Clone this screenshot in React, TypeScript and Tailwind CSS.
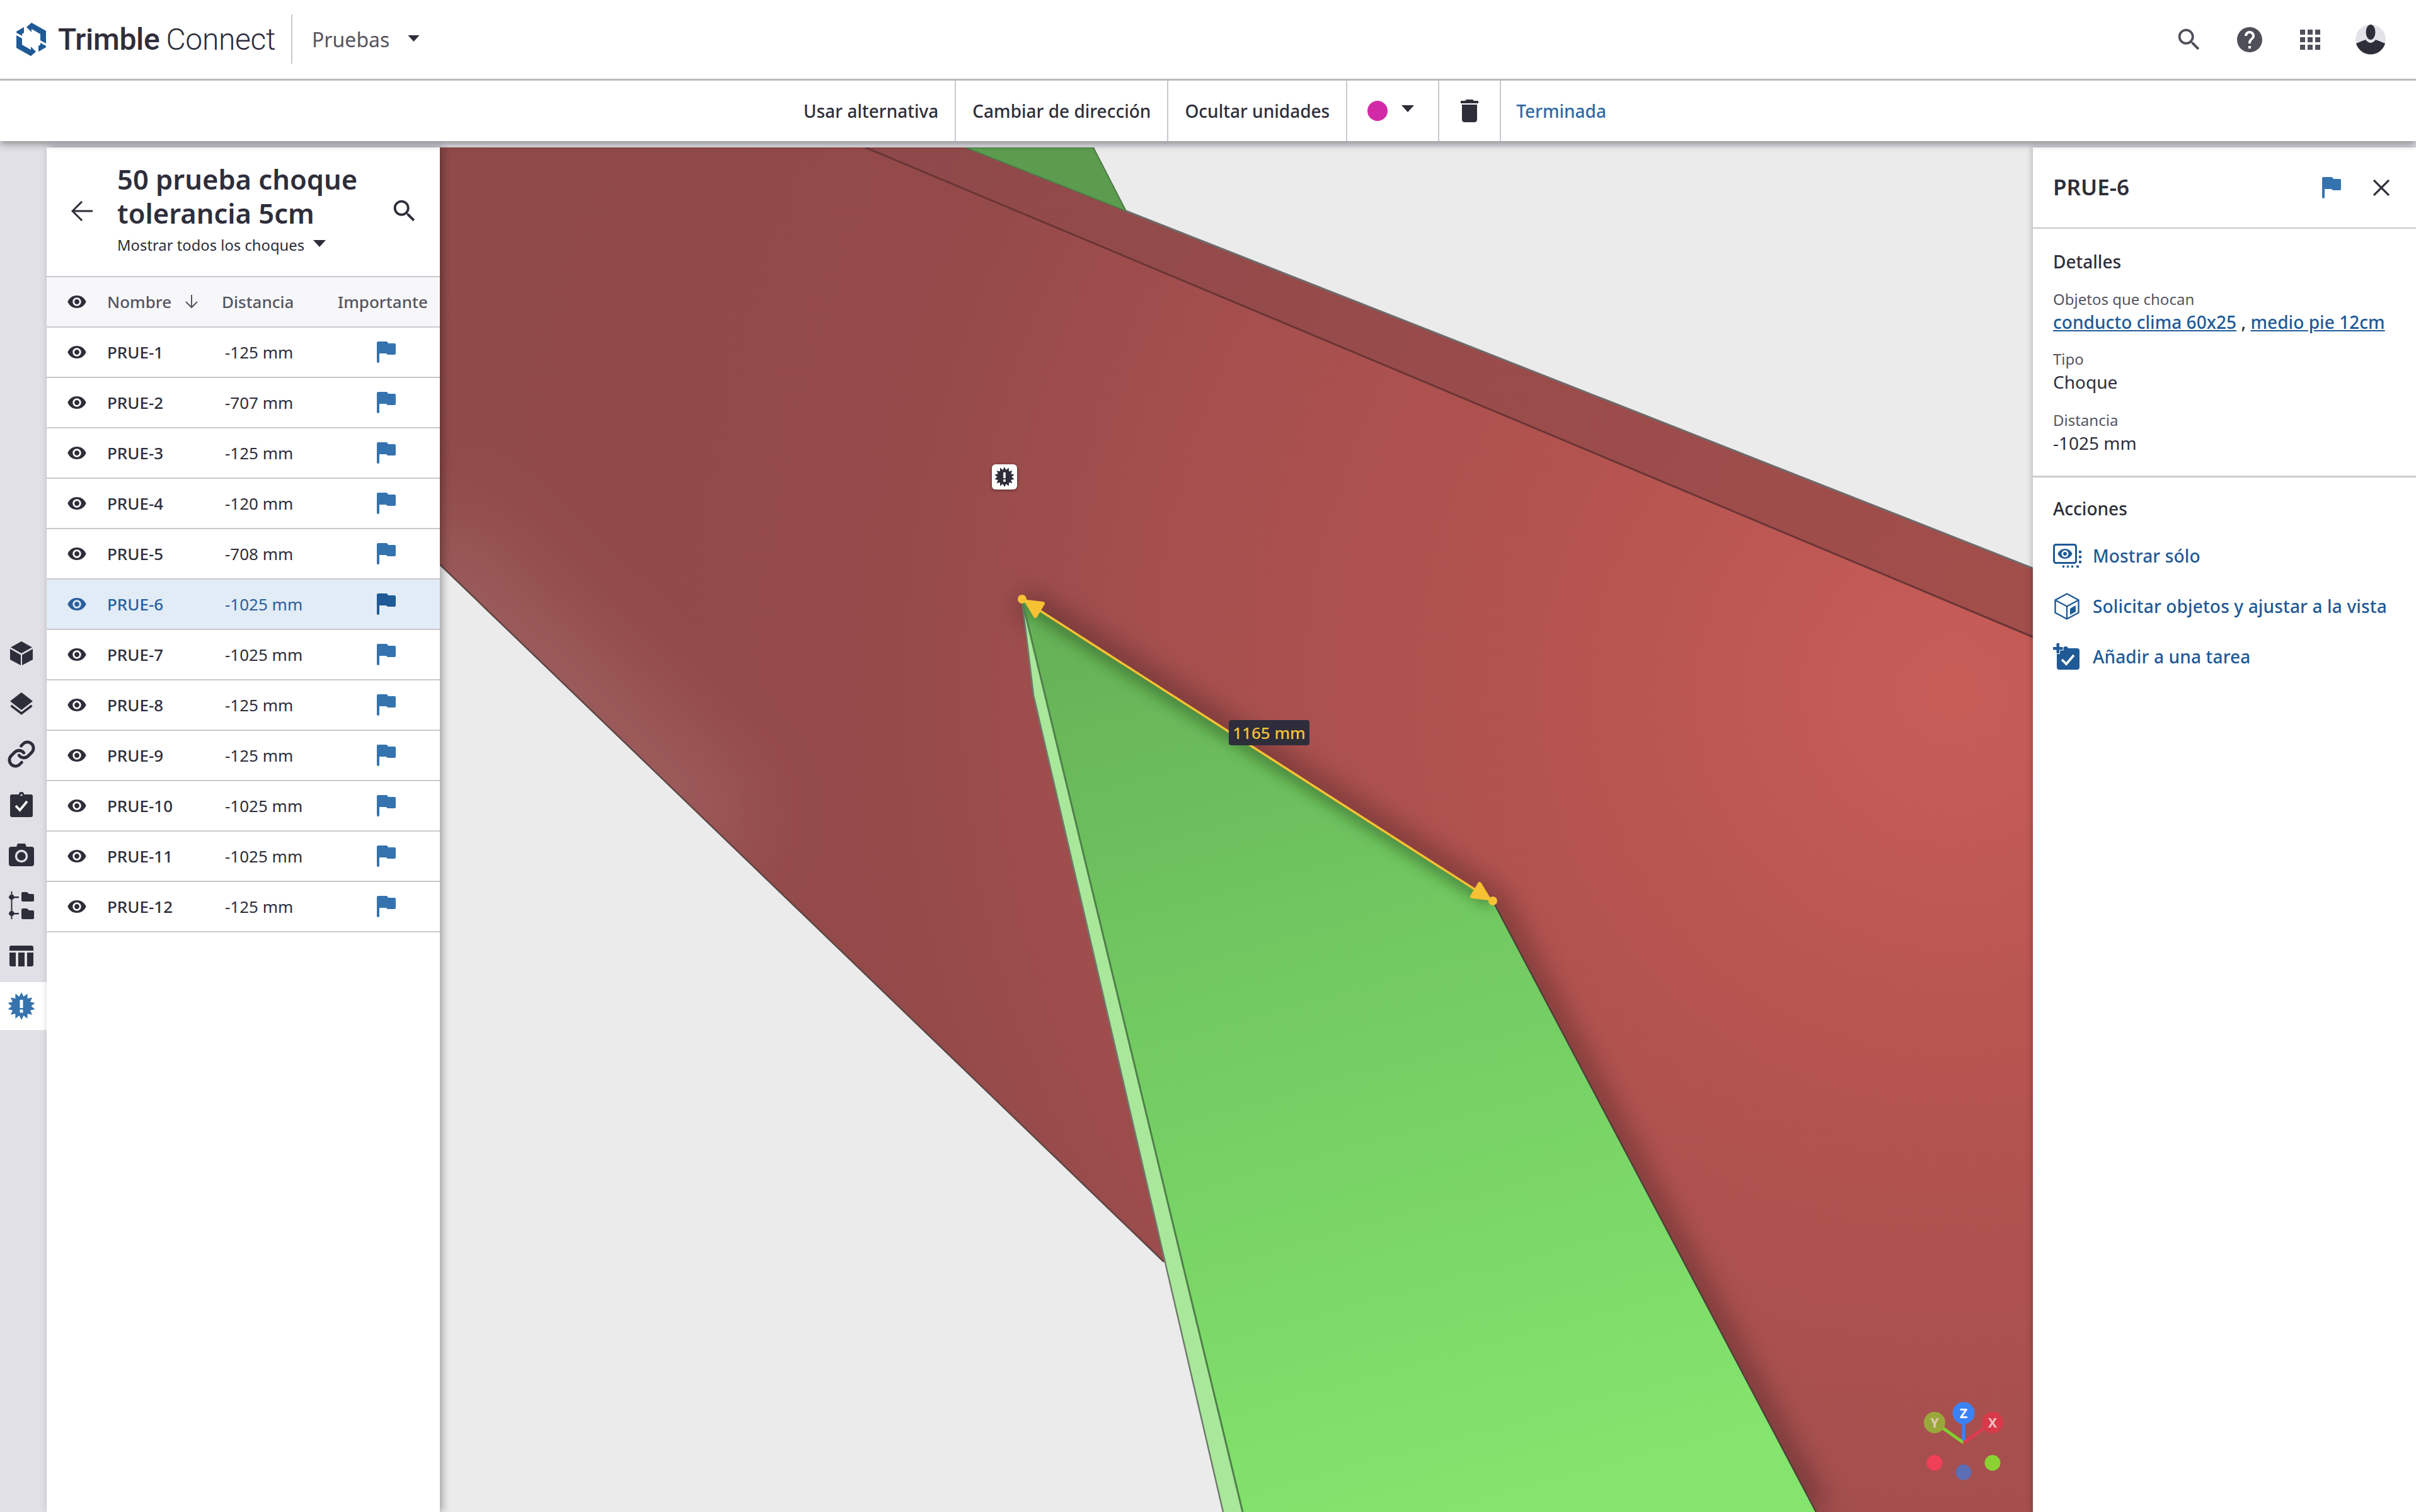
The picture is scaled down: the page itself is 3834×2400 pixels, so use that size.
import { Link } from "lucide-react";

const rows = [
  { name: "PRUE-1", dist: "-125 mm" },
  { name: "PRUE-2", dist: "-707 mm" },
  { name: "PRUE-3", dist: "-125 mm" },
  { name: "PRUE-4", dist: "-120 mm" },
  { name: "PRUE-5", dist: "-708 mm" },
  { name: "PRUE-6", dist: "-1025 mm", active: true },
  { name: "PRUE-7", dist: "-1025 mm" },
  { name: "PRUE-8", dist: "-125 mm" },
  { name: "PRUE-9", dist: "-125 mm" },
  { name: "PRUE-10", dist: "-1025 mm" },
  { name: "PRUE-11", dist: "-1025 mm" },
  { name: "PRUE-12", dist: "-125 mm" },
];

const burstPoints = Array.from({ length: 28 }, (_, i) => {
  const a = (i / 28) * Math.PI * 2 - Math.PI / 2;
  const r = i % 2 === 0 ? 22 : 15.5;
  return `${(22 + r * Math.cos(a)).toFixed(2)},${(22 + r * Math.sin(a)).toFixed(2)}`;
}).join(" ");

function Burst({ className }: { className?: string }) {
  return (
    <svg viewBox="0 0 44 44" className={className}>
      <polygon points={burstPoints} fill="currentColor" />
      <rect x="19.5" y="12" width="5" height="13" fill="#fff" />
      <rect x="19.5" y="27.5" width="5" height="5" fill="#fff" />
    </svg>
  );
}

function Eye({ className }: { className?: string }) {
  return (
    <svg viewBox="0 0 24 24" fill="currentColor" className={className}>
      <path d="M12 4.5C7 4.5 2.73 7.61 1 12c1.73 4.39 6 7.5 11 7.5s9.27-3.11 11-7.5c-1.73-4.39-6-7.5-11-7.5zM12 17c-2.76 0-5-2.24-5-5s2.24-5 5-5 5 2.24 5 5-2.24 5-5 5zm0-8c-1.66 0-3 1.34-3 3s1.34 3 3 3 3-1.34 3-3-1.34-3-3-3z" />
    </svg>
  );
}

function Flag({ className }: { className?: string }) {
  return (
    <svg viewBox="0 0 30 34" fill="currentColor" className={className}>
      <path d="M0 2Q0 0 2 0H15Q17 0 18 3H28Q30 3 30 5V19Q30 21 28 21H18Q16 21 15 19H4V32Q4 34 2 34Q0 34 0 32Z" />
    </svg>
  );
}

function Search({ className }: { className?: string }) {
  return (
    <svg viewBox="0 0 24 24" fill="currentColor" className={className}>
      <path d="M15.5 14h-.79l-.28-.27C15.41 12.59 16 11.11 16 9.5 16 5.91 13.09 3 9.5 3S3 5.91 3 9.5 5.91 16 9.5 16c1.61 0 3.09-.59 4.23-1.57l.27.28v.79l5 4.99L20.49 19l-4.99-5zm-6 0C7.01 14 5 11.99 5 9.5S7.01 5 9.5 5 14 7.01 14 9.5 11.99 14 9.5 14z" />
    </svg>
  );
}

function Caret({ className }: { className?: string }) {
  return (
    <svg viewBox="0 0 20 11" fill="currentColor" className={className}>
      <path d="M0 0H20L10 11Z" />
    </svg>
  );
}

function Logo() {
  return (
    <svg viewBox="0 0 47 53" className="w-[47px] h-[53px] text-[#1f5a96]" fill="currentColor">
      <path d="M24 0L47 13V33L38 28V18L24 10V15L16 7Z" />
      <path d="M23 53L0 40V20L9 25V35L23 43V38L31 46Z" />
      <path d="M0 14L12 7V16L9 18V21L0 16Z" />
      <path d="M47 39L35 46V37L38 35V32L47 37Z" />
    </svg>
  );
}

function RailIcon({ kind }: { kind: string }) {
  if (kind === "cube")
    return (
      <svg viewBox="0 0 36 38" className="w-[36px] h-[38px]" fill="currentColor">
        <path d="M18 0L35 9.5L18 19L1 9.5Z" />
        <path d="M0 12L17 21.5V38L0 29Z" />
        <path d="M36 12L19 21.5V38L36 29Z" />
      </svg>
    );
  if (kind === "layers")
    return (
      <svg viewBox="0 0 36 37" className="w-[36px] h-[37px]" fill="currentColor">
        <path d="M18 0L36 14L18 28L0 14Z" />
        <path d="M1.5 21L18 33.5L34.5 21" fill="none" stroke="currentColor" strokeWidth="3.5" />
      </svg>
    );
  if (kind === "link") return <Link size={46} strokeWidth={2.5} />;
  if (kind === "task")
    return (
      <svg viewBox="0 0 36 40" className="w-[36px] h-[40px]" fill="currentColor">
        <circle cx="18" cy="4" r="4" />
        <rect x="0" y="4" width="36" height="36" rx="3" />
        <circle cx="18" cy="5" r="1.6" fill="#dfdfe5" />
        <path d="M9 22L15.5 29L27 15" fill="none" stroke="#fff" strokeWidth="3.6" />
      </svg>
    );
  if (kind === "camera")
    return (
      <svg viewBox="0 0 40 36" className="w-[40px] h-[36px]" fill="currentColor">
        <path d="M12 5L14 0H26L28 5H36Q40 5 40 9V32Q40 36 36 36H4Q0 36 0 32V9Q0 5 4 5Z" />
        <circle cx="20" cy="20" r="8.5" fill="none" stroke="#dfdfe5" strokeWidth="3.4" />
      </svg>
    );
  if (kind === "tree")
    return (
      <svg viewBox="0 0 40 44" className="w-[40px] h-[44px]" fill="currentColor">
        <rect x="3.5" y="0" width="2" height="44" />
        <rect x="0" y="8" width="16" height="2.4" />
        <rect x="0" y="34" width="16" height="2.4" />
        <circle cx="4.5" cy="9" r="4" />
        <circle cx="4.5" cy="35" r="4" />
        <path d="M20 3Q20 1 22 1H29L32 4H38Q40 4 40 6V14Q40 16 38 16H22Q20 16 20 14Z" />
        <path d="M20 29Q20 27 22 27H29L32 30H38Q40 30 40 32V42Q40 44 38 44H22Q20 44 20 42Z" />
      </svg>
    );
  if (kind === "table")
    return (
      <svg viewBox="0 0 38 33" className="w-[38px] h-[33px]" fill="currentColor">
        <path d="M3 0H35Q38 0 38 3V8H0V3Q0 0 3 0Z" />
        <path d="M0 11H10V33H3Q0 33 0 30Z" />
        <rect x="14" y="11" width="10" height="22" />
        <path d="M28 11H38V30Q38 33 35 33H28Z" />
      </svg>
    );
  return <Burst className="w-[44px] h-[44px] text-[#3573ae]" />;
}

function Scene() {
  return (
    <svg viewBox="698 234 2528 2166" className="absolute inset-0 w-full h-full" preserveAspectRatio="none">
      <defs>
        <radialGradient id="red" gradientUnits="userSpaceOnUse" cx="3100" cy="1100" r="2500">
          <stop offset="0" stopColor="#c85d58" />
          <stop offset="0.28" stopColor="#b3534f" />
          <stop offset="0.52" stopColor="#a44f4e" />
          <stop offset="0.68" stopColor="#954a4a" />
          <stop offset="1" stopColor="#8f4a49" />
        </radialGradient>
        <linearGradient id="band" gradientUnits="userSpaceOnUse" x1="1400" y1="250" x2="3200" y2="950">
          <stop offset="0" stopColor="#8f494a" />
          <stop offset="1" stopColor="#a24e4b" />
        </linearGradient>
        <linearGradient id="green" gradientUnits="userSpaceOnUse" x1="1900" y1="950" x2="2300" y2="2400">
          <stop offset="0" stopColor="#66b257" />
          <stop offset="0.38" stopColor="#71c861" />
          <stop offset="1" stopColor="#84e46d" />
        </linearGradient>
        <filter id="glowBlur" x="-60%" y="-60%" width="220%" height="220%">
          <feGaussianBlur stdDeviation="70" />
        </filter>
        <filter id="soft" x="-20%" y="-20%" width="140%" height="140%">
          <feGaussianBlur stdDeviation="22" />
        </filter>
        <filter id="softer" x="-20%" y="-20%" width="140%" height="140%">
          <feGaussianBlur stdDeviation="10" />
        </filter>
        <clipPath id="redClip">
          <polygon points="698,234 1373,234 3226,1011 3226,2400 2882,2400 1847,2003 698,896" />
        </clipPath>
        <clipPath id="greenClip">
          <polygon points="1622,953 2369,1430 2882,2400 1972,2400" />
        </clipPath>
      </defs>

      <rect x="698" y="234" width="2528" height="2166" fill="#ebebeb" />

      <polygon points="1373,234 1532,234 1787,335 3226,902 3226,1011" fill="url(#band)" />
      <polygon points="1532,234 1735,234 1787,335" fill="#5b9c4e" stroke="#4f7a48" strokeWidth="2" />
      <polyline points="1787,335 3226,902" fill="none" stroke="#6f6a6a" strokeWidth="3" />

      <polygon points="698,234 1373,234 3226,1011 3226,2400 2882,2400 1847,2003 698,896" fill="url(#red)" />
      <g clipPath="url(#redClip)">
        <polyline points="640,860 1150,1350" fill="none" stroke="#fff" strokeOpacity="0.11" strokeWidth="170" filter="url(#glowBlur)" />
      </g>
      <polyline points="1373,234 3226,1011" fill="none" stroke="#6b3535" strokeWidth="3" />
      <polyline points="698,896 1847,2003" fill="none" stroke="#5e4545" strokeWidth="2.5" />

      <g clipPath="url(#redClip)">
        <polyline points="1622,953 2369,1430 2882,2400" fill="none" stroke="#000" strokeOpacity="0.33" strokeWidth="36" filter="url(#soft)" />
      </g>

      <polygon points="1622,953 1640,1103 1941,2400 1972,2400" fill="#a9e89a" />
      <polyline points="1622,953 1640,1103 1941,2400" fill="none" stroke="#6d7a6a" strokeWidth="2.5" />
      <polygon points="1622,953 2369,1430 2882,2400 1972,2400" fill="url(#green)" />
      <g clipPath="url(#greenClip)">
        <polyline points="1622,953 2369,1430" fill="none" stroke="#1e4a1a" strokeOpacity="0.45" strokeWidth="26" filter="url(#softer)" />
      </g>
      <polyline points="1622,953 1972,2400" fill="none" stroke="#4f7f4a" strokeWidth="3" />
      <polyline points="2369,1430 2882,2400" fill="none" stroke="#4e4038" strokeWidth="2.5" />

      <line x1="1622" y1="951" x2="2369" y2="1430" stroke="#f6c233" strokeWidth="3.5" />
      <circle cx="1622" cy="951" r="7" fill="#f6c233" />
      <circle cx="2369" cy="1430" r="7" fill="#f6c233" />
      <polygon points="1629,955 1643,978 1655,958" fill="#f6c233" stroke="#f6c233" strokeWidth="6" strokeLinejoin="round" />
      <polygon points="2362,1426 2336,1423 2348,1403" fill="#f6c233" stroke="#f6c233" strokeWidth="6" strokeLinejoin="round" />

      {/* axis gizmo */}
      <line x1="3116" y1="2290" x2="3116" y2="2258" stroke="#3b82f6" strokeWidth="5" />
      <line x1="3116" y1="2290" x2="3082" y2="2266" stroke="#80d030" strokeWidth="5" />
      <line x1="3116" y1="2290" x2="3150" y2="2266" stroke="#e03a50" strokeWidth="5" />
      <circle cx="3070" cy="2258" r="17" fill="#99a83a" />
      <circle cx="3162" cy="2258" r="17" fill="#d83a4a" />
      <circle cx="3116" cy="2243" r="17.5" fill="#3b82f6" />
      <g fontFamily="'Noto Sans', sans-serif" fontWeight="700" fontSize="21" textAnchor="middle">
        <text x="3070" y="2265.5" fill="#e4c8b8">Y</text>
        <text x="3162" y="2265.5" fill="#eec0c0">X</text>
        <text x="3116" y="2250.5" fill="#fff">Z</text>
      </g>
      <circle cx="3070" cy="2322" r="12.5" fill="#ef4057" />
      <circle cx="3116" cy="2337" r="12.5" fill="#5d6eb5" />
      <circle cx="3162" cy="2322" r="12.5" fill="#8ad232" />
    </svg>
  );
}

export default function App() {
  return (
    <div className="flex flex-col w-[3834px] h-[2400px] overflow-hidden bg-[#e0e0e6] font-['Noto_Sans',sans-serif] text-[#2e2e3a]">
      {/* Top bar */}
      <header className="flex items-center h-[128px] shrink-0 bg-white border-b-[3px] border-[#b9b9c0] relative z-30">
        <div className="ml-[26px]">
          <Logo />
        </div>
        <div className="ml-[19px] text-[48px] leading-none font-['Roboto',sans-serif] tracking-[-0.3px] whitespace-nowrap flex gap-[10px] w-[370px]">
          <span className="font-medium">Trimble</span>
          <span className="font-light">Connect</span>
        </div>
        <div className="h-[78px] w-[2px] bg-[#c8c8cd] -mt-[2px]" />
        <span className="ml-[31px] text-[32px] text-[#55555f]">Pruebas</span>
        <Caret className="ml-[29px] w-[19px] h-[10px] text-[#2e2e3a] -mt-[4px]" />
        <div className="ml-auto mr-[48px] flex items-center gap-[49px] text-[#4f4f5a]">
          <Search className="w-[46px] h-[46px]" />
          <svg viewBox="0 0 24 24" fill="currentColor" className="w-[48px] h-[48px]">
            <path d="M12 2C6.48 2 2 6.48 2 12s4.48 10 10 10 10-4.48 10-10S17.52 2 12 2zm1 17h-2v-2h2v2zm2.07-7.75l-.9.92C13.45 12.9 13 13.5 13 15h-2v-.5c0-1.1.45-2.1 1.17-2.83l1.24-1.26c.37-.36.59-.86.59-1.41 0-1.1-.9-2-2-2s-2 .9-2 2H8c0-2.21 1.79-4 4-4s4 1.79 4 4c0 .88-.36 1.68-.93 2.25z" />
          </svg>
          <svg viewBox="0 0 32 32" fill="currentColor" className="w-[32px] h-[32px] ml-[7px]">
            <rect x="0" y="0" width="8" height="8" />
            <rect x="12" y="0" width="8" height="8" />
            <rect x="24" y="0" width="8" height="8" />
            <rect x="0" y="12" width="8" height="8" />
            <rect x="12" y="12" width="8" height="8" />
            <rect x="24" y="12" width="8" height="8" />
            <rect x="0" y="24" width="8" height="8" />
            <rect x="12" y="24" width="8" height="8" />
            <rect x="24" y="24" width="8" height="8" />
          </svg>
          <svg viewBox="0 0 48 48" className="w-[48px] h-[48px] ml-[7px]">
            <circle cx="24" cy="24" r="24" fill="#e2e2e8" />
            <ellipse cx="24" cy="12" rx="7.5" ry="12" fill="#2e2e3a" />
            <path d="M1 30Q8 27 16 24Q24 34 32 24Q40 27 47 30A24 24 0 0 1 1 30Z" fill="#2e2e3a" />
          </svg>
        </div>
      </header>

      {/* Clash toolbar */}
      <div className="flex justify-center h-[96px] shrink-0 bg-white shadow-[0_4px_12px_rgba(0,0,0,0.4)] relative z-20 pr-[12px]">
        <button className="px-[26px] text-[28px] font-medium border-r-2 border-[#c9c9ce]">Usar alternativa</button>
        <button className="px-[26px] text-[28px] font-medium border-r-2 border-[#c9c9ce]">Cambiar de dirección</button>
        <button className="px-[26px] text-[28px] font-medium border-r-2 border-[#c9c9ce]">Ocultar unidades</button>
        <div className="flex items-center pl-[32px] w-[146px] border-r-2 border-[#c9c9ce]">
          <span className="w-[32px] h-[32px] rounded-full bg-[#d22aa6]" />
          <Caret className="ml-[22px] w-[20px] h-[11px] -mt-[8px]" />
        </div>
        <div className="flex items-center justify-center w-[98px] border-r-2 border-[#c9c9ce]">
          <svg viewBox="0 0 24 24" fill="currentColor" className="w-[48px] h-[48px]">
            <path d="M6 19c0 1.1.9 2 2 2h8c1.1 0 2-.9 2-2V7H6v12zM19 4h-3.5l-1-1h-5l-1 1H5v2h14V4z" />
          </svg>
        </div>
        <button className="px-[24px] text-[28px] font-medium text-[#2f6aa8]">Terminada</button>
      </div>

      <div className="flex flex-1 min-h-0 pt-[10px]">
        {/* Left rail */}
        <nav className="w-[74px] shrink-0 flex flex-col items-center pt-[763px] pr-[6px]">
          {["cube", "layers", "link", "task", "camera", "tree", "table"].map((k) => (
            <div key={k} className="h-[80px] flex items-center justify-center shrink-0">
              <RailIcon kind={k} />
            </div>
          ))}
          <div className="-mr-[6px] mt-[2px] w-[74px] h-[76px] bg-white flex items-center justify-center pr-[6px] shrink-0">
            <RailIcon kind="clash" />
          </div>
        </nav>

        {/* Clash list */}
        <aside className="w-[624px] shrink-0 bg-white flex flex-col relative z-10 shadow-[4px_0_12px_rgba(0,0,0,0.32)]">
          <div className="flex items-start h-[206px] border-b-2 border-[#c8c8cf]">
            <div className="w-[112px] h-[202px] flex items-center justify-center shrink-0">
              <svg viewBox="0 0 34 32" fill="none" stroke="currentColor" strokeWidth="3" className="w-[34px] h-[32px]">
                <path d="M34 16H2M17 1L2 16L17 31" />
              </svg>
            </div>
            <div className="w-[420px] shrink-0 pt-[23px]">
              <h1 className="text-[43.5px] leading-[54px] font-semibold">50 prueba choque tolerancia 5cm</h1>
              <div className="mt-[7px] flex items-center text-[23.8px] leading-[34px]">
                Mostrar todos los choques
                <Caret className="ml-[14px] w-[20px] h-[11px] -mt-[6px]" />
              </div>
            </div>
            <div className="h-[202px] flex items-center ml-[13px]">
              <Search className="w-[46px] h-[46px]" />
            </div>
          </div>

          <div className="flex items-center h-[80px] pl-[32px] bg-[#f7f7f9] border-b-2 border-[#c8c8cf] text-[26px] font-medium text-[#55555f]">
            <Eye className="w-[32px] h-[32px] mr-[32px] text-[#2e2e3a]" />
            <div className="w-[182px] flex items-center">
              Nombre
              <svg viewBox="0 0 20 22" fill="none" stroke="currentColor" strokeWidth="2" className="ml-[22px] w-[20px] h-[22px]">
                <path d="M10 0V20M1 11L10 20L19 11" />
              </svg>
            </div>
            <div className="w-[184px]">Distancia</div>
            <div>Importante</div>
          </div>

          {rows.map((r) => (
            <div
              key={r.name}
              className={
                r.active
                  ? "flex items-center h-[80px] pl-[32px] bg-[#e1ecf6] border-b-2 border-[#c8c8cf] text-[26px] text-[#2a5f9e]"
                  : "flex items-center h-[80px] pl-[32px] border-b-2 border-[#c8c8cf] text-[26px]"
              }
            >
              <Eye className="w-[32px] h-[32px] mr-[32px]" />
              <div className="w-[187px] font-medium">{r.name}</div>
              <div className="w-[241px]">{r.dist}</div>
              <Flag className={r.active ? "w-[30px] h-[34px] text-[#1f5a96]" : "w-[30px] h-[34px] text-[#3573ae]"} />
            </div>
          ))}
        </aside>

        {/* 3D view */}
        <main className="relative flex-1 min-w-0">
          <Scene />
          <div className="absolute left-[876px] top-[503px] w-[40px] h-[40px] rounded-[6px] bg-white shadow-[0_1px_4px_rgba(0,0,0,0.45)] flex items-center justify-center text-[#2e2e3a]">
            <Burst className="w-[32px] h-[32px]" />
          </div>
          <div className="absolute left-[1252px] top-[909px] h-[40px] w-[128px] rounded-[4px] bg-[#2d2d3c] flex items-center justify-center text-[26px] font-medium text-[#f6c233] whitespace-nowrap">
            1165 mm
          </div>
        </main>

        {/* Details */}
        <aside className="w-[608px] shrink-0 bg-white relative z-10 shadow-[-2px_0_8px_rgba(0,0,0,0.22)]">
          <div className="flex items-center h-[129px] pl-[32px] pr-[42px] border-b-2 border-[#c8c8cf]">
            <span className="text-[35px] font-semibold">PRUE-6</span>
            <Flag className="ml-auto w-[30px] h-[34px] text-[#3573ae]" />
            <svg viewBox="0 0 26 26" fill="none" stroke="currentColor" strokeWidth="3.2" className="ml-[51px] w-[26px] h-[26px]">
              <path d="M1 1L25 25M25 1L1 25" />
            </svg>
          </div>

          <div className="pl-[32px] pt-[32px] pb-[33px] border-b-[3px] border-[#cdcdd2]">
            <div className="text-[28px] leading-[40px] font-medium">Detalles</div>
            <div className="mt-[24px] text-[24px] leading-[32px] text-[#55555f]">Objetos que chocan</div>
            <div className="mt-[1px] text-[28px] leading-[38px] font-medium whitespace-nowrap tracking-[0.05px]">
              <span className="underline text-[#1f5a96]">conducto clima 60x25</span>
              <span> , </span>
              <span className="underline text-[#1f5a96]">medio pie 12cm</span>
            </div>
            <div className="mt-[24px] text-[24px] leading-[32px] text-[#55555f]">Tipo</div>
            <div className="mt-[1px] text-[28px] leading-[38px]">Choque</div>
            <div className="mt-[26px] text-[24px] leading-[32px] text-[#55555f]">Distancia</div>
            <div className="mt-[1px] text-[28px] leading-[38px]">-1025 mm</div>
          </div>

          <div className="pl-[32px] pt-[29px]">
            <div className="text-[28px] leading-[40px] font-medium">Acciones</div>
            <div className="mt-[15px] flex flex-col text-[#1f5a96] text-[28px] font-medium tracking-[0.15px]">
              <div className="flex items-center h-[80px]">
                <svg viewBox="0 0 45 38" className="w-[45px] h-[38px]" fill="currentColor">
                  <rect x="1.5" y="1.5" width="35" height="29" rx="3" fill="none" stroke="currentColor" strokeWidth="3" />
                  <path d="M19 8C13.5 8 9 12 7.5 16C9 20 13.5 24 19 24S29 20 30.5 16C29 12 24.5 8 19 8ZM19 21.5C16 21.5 13.5 19 13.5 16S16 10.5 19 10.5 24.5 13 24.5 16 22 21.5 19 21.5ZM19 13C17.3 13 16 14.3 16 16S17.3 19 19 19 22 17.7 22 16 20.7 13 19 13Z" />
                  <rect x="41" y="11" width="4" height="4" />
                  <rect x="41" y="19" width="4" height="4" />
                  <rect x="41" y="27" width="4" height="4" />
                  <rect x="15" y="34.5" width="3" height="3.5" />
                  <rect x="22" y="34.5" width="3" height="3.5" />
                  <rect x="29" y="34.5" width="3" height="3.5" />
                  <rect x="37" y="34.5" width="4" height="3.5" />
                </svg>
                <span className="ml-[18px]">Mostrar sólo</span>
              </div>
              <div className="flex items-center h-[80px]">
                <svg viewBox="0 0 40 43" className="ml-[2px] w-[40px] h-[43px]" fill="none" stroke="currentColor" strokeWidth="2.4">
                  <path d="M20 1.5L38.5 11.5V31.5L20 41.5L1.5 31.5V11.5Z" />
                  <path d="M1.5 11.5L20 21.5L38.5 11.5M20 21.5V41.5" />
                  <path d="M25 25L34 20V30L25 35Z" fill="currentColor" stroke="none" />
                </svg>
                <span className="ml-[21px]">Solicitar objetos y ajustar a la vista</span>
              </div>
              <div className="flex items-center h-[80px]">
                <svg viewBox="0 0 42 42" className="w-[42px] h-[42px]" fill="currentColor">
                  <path d="M6 8H16C17 4 23 4 24 8H38Q42 8 42 12V38Q42 42 38 42H10Q6 42 6 38Z" />
                  <path d="M5.5 0H10V6H15.5V10.5H10V16H5.5V10.5H0V6H5.5Z" stroke="#fff" strokeWidth="2" paintOrder="stroke" />
                  <path d="M14 26L21 33L33 19" fill="none" stroke="#fff" strokeWidth="3.6" />
                </svg>
                <span className="ml-[21px]">Añadir a una tarea</span>
              </div>
            </div>
          </div>
        </aside>
      </div>
    </div>
  );
}
